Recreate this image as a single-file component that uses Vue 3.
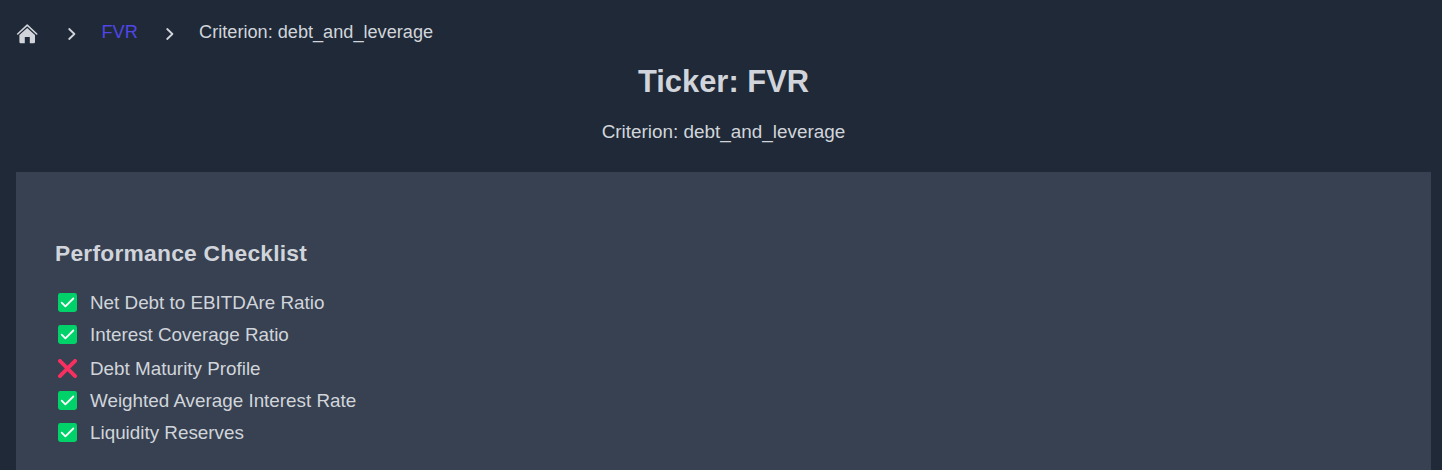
<script setup>
const items = [
  { label: 'Net Debt to EBITDAre Ratio', ok: true },
  { label: 'Interest Coverage Ratio', ok: true },
  { label: 'Debt Maturity Profile', ok: false },
  { label: 'Weighted Average Interest Rate', ok: true },
  { label: 'Liquidity Reserves', ok: true },
]
</script>

<template>
  <div class="page">
    <nav class="crumbs">
      <svg class="home" width="22" height="20" viewBox="0 0 22 20">
        <path d="M1.7 10 11.2 1.2l9.5 8.8" fill="none" stroke="currentColor" stroke-width="1.6" stroke-linecap="round" stroke-linejoin="round" />
        <path d="M11.2 3.9 19 11.1V18q0 1.2-1.2 1.2H13.8V13H8.8V19.2H4.6Q3.4 19.2 3.4 18V11.1Z" fill="currentColor" />
      </svg>
      <svg class="chev" width="8" height="12" viewBox="0 0 8 12"><path d="M1.2 1 6.4 6 1.2 11" /></svg>
      <a class="ticker">FVR</a>
      <svg class="chev" width="8" height="12" viewBox="0 0 8 12"><path d="M1.2 1 6.4 6 1.2 11" /></svg>
      <span class="current">Criterion: debt_and_leverage</span>
    </nav>
    <header>
      <h1>Ticker: FVR</h1>
      <p>Criterion: debt_and_leverage</p>
    </header>
    <section class="panel">
      <h2>Performance Checklist</h2>
      <ul>
        <li v-for="item in items" :key="item.label" :class="{ failed: !item.ok }">
          <svg width="19" height="19" viewBox="0 0 19 19">
            <template v-if="item.ok">
              <rect width="19" height="19" rx="2.4" fill="#00d26a" />
              <path d="M3.7 9.6 7.4 13.3 15.3 5.5" fill="none" stroke="#fff" stroke-width="1.8" stroke-linecap="round" stroke-linejoin="round" />
            </template>
            <path v-else d="M1.9 1.9 17.1 17.1M17.1 1.9 1.9 17.1" fill="none" stroke="#f92f60" stroke-width="3.8" stroke-linecap="round" />
          </svg>
          <span>{{ item.label }}</span>
        </li>
      </ul>
    </section>
  </div>
</template>

<style>
body { margin: 0; background: #1f2937; overflow: hidden; }
</style>

<style scoped>
.page {
  box-sizing: border-box;
  height: 470px;
  overflow: hidden;
  background: #1f2937;
  color: #d1d5db;
  font-family: "Liberation Sans", Arial, sans-serif;
}
.crumbs {
  display: flex;
  align-items: center;
  height: 64px;
  padding-left: 16px;
  font-size: 18.15px;
}
.home { margin: 3px 30px 0 0; }
.chev { margin-top: 4px; fill: none; stroke: currentColor; stroke-width: 1.8; stroke-linecap: round; stroke-linejoin: round; }
.ticker { margin: 0 28px 0 25.5px; color: #4f46e5; }
.current { margin-left: 25.3px; }
header { height: 108px; padding-left: 5px; text-align: center; }
h1 { margin: 0; font-size: 30.9px; line-height: 36px; }
p { margin: 21px 0 0; font-size: 18.9px; line-height: 22px; }
.panel {
  box-sizing: border-box;
  height: 298px;
  margin: 0 11px 0 16px;
  padding: 67px 39px 0;
  background: #374151;
}
h2 { margin: 0; font-size: 22.8px; line-height: 28px; letter-spacing: 0.24px; }
ul { margin: 19px 0 0; padding: 0; list-style: none; }
li { display: flex; align-items: center; gap: 13px; height: 32px; padding-left: 3px; font-size: 18.83px; }
li span { padding-top: 1px; }
li.failed { padding-top: 2px; }
</style>
